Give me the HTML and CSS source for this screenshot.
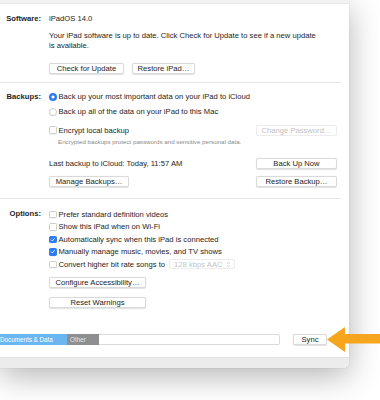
FILE: index.html
```html
<!DOCTYPE html>
<html lang="en">
<head>
    <meta charset="UTF-8">
    <meta name="viewport" content="width=device-width, initial-scale=1.0">
    <link rel="stylesheet" href="styles.css">
    <title>iPad - Summary</title>
</head>
<body>
    <div class="window">
        <div class="tabline"></div>

        <section class="group software">
            <div class="label">Software:</div>
            <div class="body">
                <div class="line">iPadOS 14.0</div>
                <p class="desc">Your iPad software is up to date. Click Check for Update to see if a new update is available.</p>
                <div class="buttons">
                    <button class="btn w75">Check for Update</button>
                    <button class="btn w63">Restore iPad…</button>
                </div>
            </div>
        </section>

        <div class="divider"></div>

        <section class="group backups">
            <div class="label">Backups:</div>
            <div class="body">
                <div class="row">
                    <span class="radio on"></span>
                    <span>Back up your most important data on your iPad to iCloud</span>
                </div>
                <div class="row second">
                    <span class="radio"></span>
                    <span>Back up all of the data on your iPad to this Mac</span>
                </div>
                <div class="row split encrypt">
                    <div class="check-line">
                        <span class="box"></span>
                        <span>Encrypt local backup</span>
                    </div>
                    <button class="btn w81 disabled">Change Password…</button>
                </div>
                <div class="hint">Encrypted backups protect passwords and sensitive personal data.</div>
                <div class="row split last">
                    <span>Last backup to iCloud: Today, 11:57 AM</span>
                    <button class="btn w81">Back Up Now</button>
                </div>
                <div class="row split manage">
                    <button class="btn w80">Manage Backups…</button>
                    <button class="btn w81">Restore Backup…</button>
                </div>
            </div>
        </section>

        <div class="divider"></div>

        <section class="group options">
            <div class="label opt-label">Options:</div>
            <div class="body">
                <div class="opt"><span class="box"></span><span>Prefer standard definition videos</span></div>
                <div class="opt"><span class="box"></span><span>Show this iPad when on Wi-Fi</span></div>
                <div class="opt">
                    <span class="box on"><svg viewBox="0 0 8 8"><path d="M1.8 4.1 L3.4 5.8 L6.3 2.2" /></svg></span>
                    <span>Automatically sync when this iPad is connected</span>
                </div>
                <div class="opt">
                    <span class="box on"><svg viewBox="0 0 8 8"><path d="M1.8 4.1 L3.4 5.8 L6.3 2.2" /></svg></span>
                    <span>Manually manage music, movies, and TV shows</span>
                </div>
                <div class="opt">
                    <span class="box"></span><span>Convert higher bit rate songs to</span>
                    <span class="popup">128 kbps AAC
                        <svg viewBox="0 0 6 8"><path d="M1.2 3 L3 1.3 L4.8 3 M1.2 5 L3 6.7 L4.8 5" /></svg>
                    </span>
                </div>
                <button class="btn w97 configure">Configure Accessibility…</button>
                <button class="btn w97 reset">Reset Warnings</button>
            </div>
        </section>

        <div class="storage-row">
            <div class="storage">
                <div class="seg docs">Documents &amp; Data</div>
                <div class="seg other">Other</div>
                <div class="seg free"></div>
            </div>
            <button class="btn sync">Sync</button>
        </div>

        <div class="footer"></div>
    </div>

    <svg class="arrow" viewBox="0 0 53 25">
        <polygon points="0,12.5 18,0 18,7 53,7 53,16.5 18,16.5 18,25" />
    </svg>
</body>
</html>
```

FILE: styles.css
```css
*{
    box-sizing: border-box;
}

body{
    margin: 0;
    height: 400px;
    overflow: hidden;
    background-color: #fff;
    font-family: "Liberation Sans", Arial, sans-serif;
    font-size: 7.65px;
    color: #1e1e1e;
}

.window{
    width: 349px;
    height: 368px;
    display: flex;
    flex-direction: column;
    background-color: #fff;
    border-bottom-right-radius: 5px;
    box-shadow: 0 8px 32px rgba(0, 0, 0, 0.3), 0 0 1px rgba(0, 0, 0, 0.25);
}

.tabline{
    height: 4px;
    background-color: #f3f3f3;
    border-bottom: 1px solid #e8e8e8;
}

.group{
    display: grid;
    grid-template-columns: 41px 1fr;
    column-gap: 8px;
    padding-right: 12px;
}

.label{
    font-weight: bold;
    text-align: right;
    line-height: 11px;
}

.divider{
    height: 1px;
    margin-right: 8px;
    background-color: #e6e6e6;
}

/* buttons */
.btn{
    display: block;
    height: 11px;
    padding: 0;
    border: 1px solid #dadada;
    border-radius: 2px;
    background-color: #fff;
    box-shadow: 0 0.5px 1px rgba(0, 0, 0, 0.12);
    font: inherit;
    line-height: 9px;
    color: #1e1e1e;
    text-align: center;
}

.btn.disabled{
    color: #c2c2c2;
    border-color: #ececec;
    box-shadow: none;
}

.w63{ width: 63px; }
.w75{ width: 75px; }
.w80{ width: 80px; }
.w81{ width: 81px; }
.w97{ width: 97px; }

/* software */
.software{
    padding-top: 9px;
    padding-bottom: 8px;
}

.line{
    line-height: 11px;
}

.desc{
    margin: 7px 0 0;
    max-width: 274px;
    line-height: 10px;
}

.buttons{
    display: flex;
    gap: 8px;
    margin-top: 12px;
}

/* backups */
.backups{
    padding-top: 8px;
    padding-bottom: 11px;
}

.row{
    display: flex;
    align-items: center;
    height: 11px;
    line-height: 11px;
}

.row.split{
    justify-content: space-between;
}

.row.second{ margin-top: 4px; }
.row.encrypt{ margin-top: 7.5px; }
.row.last{ margin-top: 12.5px; }
.row.manage{ margin-top: 7px; }

.check-line{
    display: flex;
    align-items: center;
}

.radio{
    width: 8px;
    height: 8px;
    margin-right: 1.5px;
    border-radius: 50%;
    border: 0.5px solid #cfcfcf;
    background-color: #fff;
    box-shadow: 0 0.5px 0.5px rgba(0, 0, 0, 0.08);
}

.radio.on{
    border: none;
    background: radial-gradient(circle, #fff 0 1.4px, #2d7cf6 1.7px);
}

.box{
    display: inline-flex;
    flex: none;
    width: 7.5px;
    height: 7.5px;
    margin-right: 2px;
    border: 0.5px solid #cdcdcd;
    border-radius: 1.5px;
    background-color: #fff;
    box-shadow: 0 0.5px 0.5px rgba(0, 0, 0, 0.08);
}

.box.on{
    border-color: #2d7cf6;
    background-color: #2d7cf6;
}

.box svg{
    width: 100%;
    height: 100%;
}

.box path{
    fill: none;
    stroke: #fff;
    stroke-width: 1.2;
    stroke-linecap: round;
    stroke-linejoin: round;
}

.hint{
    margin-top: 1px;
    padding-left: 9px;
    font-size: 6.2px;
    line-height: 9px;
    color: #8a8a8a;
}

/* options */
.options{
    padding-top: 9px;
}

.opt-label{
    line-height: 12.5px;
}

.opt{
    display: flex;
    align-items: center;
    height: 12.5px;
}

.popup{
    display: inline-flex;
    align-items: center;
    justify-content: space-between;
    width: 66px;
    height: 10px;
    margin-left: 4px;
    padding: 0 3px 0 4px;
    border: 1px solid #ececec;
    border-radius: 2px;
    color: #c4c4c4;
}

.popup svg{
    width: 5px;
    height: 7px;
}

.popup path{
    fill: none;
    stroke: #c4c4c4;
    stroke-width: 0.9;
}

.configure{
    margin-top: 6px;
}

.reset{
    margin-top: 9px;
}

/* storage bar */
.storage-row{
    display: flex;
    align-items: center;
    margin-top: auto;
    margin-bottom: 12px;
}

.storage{
    display: flex;
    width: 280px;
    height: 11px;
}

.seg{
    height: 100%;
    font-size: 6.3px;
    line-height: 11px;
    color: #fff;
    white-space: nowrap;
}

.docs{
    width: 67px;
    background-color: #6ab6f0;
}

.other{
    width: 32px;
    padding-left: 3px;
    background-color: #8f8f91;
    color: #e6e6e6;
}

.free{
    flex: 1;
    border: 1px solid #dadada;
    border-left: none;
    border-radius: 0 2px 2px 0;
}

.sync{
    width: 34px;
    height: 10.5px;
    margin-left: 13px;
}

.footer{
    height: 11px;
    background-color: #ececec;
    border-top: 1px solid #e2e2e2;
    border-bottom-right-radius: 5px;
}

.arrow{
    position: absolute;
    left: 327px;
    top: 327px;
    width: 53px;
    height: 25px;
    fill: #f7a51d;
}
```
